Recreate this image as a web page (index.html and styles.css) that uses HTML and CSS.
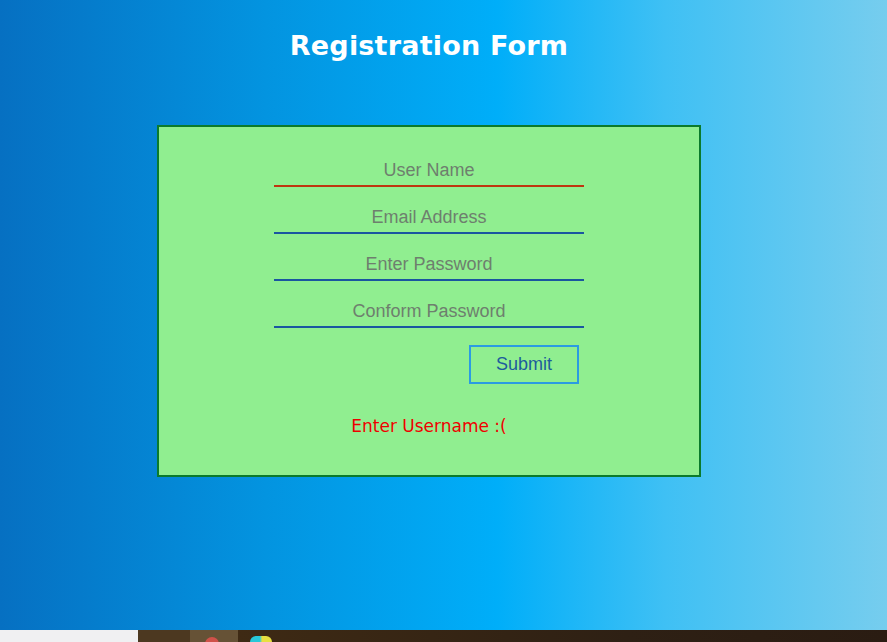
FILE: index.html
```html
<!DOCTYPE html>
<html lang="en">
<head>
<meta charset="utf-8">
<title>Registration Form</title>
<link rel="stylesheet" href="styles.css">
</head>
<body>
<div class="screen">
  <main class="page">
    <div class="wrap">
      <h1 class="title">Registration Form</h1>
      <form class="card" onsubmit="return false;">
        <input class="field field-error" type="text" placeholder="User Name">
        <input class="field" type="email" placeholder="Email Address">
        <input class="field" type="password" placeholder="Enter Password">
        <input class="field" type="password" placeholder="Conform Password">
        <div class="actions">
          <button class="submit" type="submit">Submit</button>
        </div>
        <p class="message">Enter Username :(</p>
      </form>
    </div>
  </main>
  <div class="taskbar">
    <div class="tb-blank"></div>
    <div class="tb-btn"></div>
    <div class="tb-btn tb-active"><span class="tb-dot"></span></div>
    <div class="tb-rest"><span class="tb-icon"></span></div>
  </div>
</div>
</body>
</html>
```
FILE: styles.css
```css
html, body {
  margin: 0;
  padding: 0;
  height: 100%;
}
body {
  overflow: hidden;
}
.screen {
  display: flex;
  flex-direction: column;
  height: 642px;
}
.page {
  height: 630px;
  background: linear-gradient(to right, #0670c2 0%, #0394e0 30%, #00aef9 56%, #3fc0f4 75%, #76cdee 100%);
}
.wrap {
  width: 858px;
  display: flex;
  flex-direction: column;
  align-items: center;
}
.title {
  margin: 25px 0 0;
  height: 100px;
  font-family: "Comic Sans MS", "DejaVu Sans", sans-serif;
  font-weight: bold;
  font-size: 27px;
  line-height: 42px;
  color: #ffffff;
  letter-spacing: 0.2px;
}
.card {
  box-sizing: border-box;
  width: 544px;
  height: 352px;
  background: #90ee90;
  border: 2px solid #0b7a2c;
  display: flex;
  flex-direction: column;
  align-items: center;
  padding-top: 24px;
}
.field {
  box-sizing: border-box;
  width: 310px;
  height: 36px;
  margin: 0 0 11px;
  padding: 4px 0 0;
  border: none;
  border-bottom: 2px solid #1a56a0;
  background: transparent;
  text-align: center;
  font-family: "Liberation Sans", Arial, sans-serif;
  font-size: 18px;
  color: #333;
  outline: none;
}
.field::placeholder {
  color: #6e7f6e;
}
.field-error {
  border-bottom-color: #bf3510;
}
.actions {
  width: 310px;
  display: flex;
  justify-content: flex-end;
  margin-top: 6px;
}
.submit {
  box-sizing: border-box;
  width: 110px;
  height: 39px;
  margin-right: 5px;
  background: transparent;
  border: 2px solid #2b9be2;
  font-family: "Liberation Sans", Arial, sans-serif;
  font-size: 18px;
  color: #1c5c9c;
  padding: 0;
}
.message {
  margin: 30px 0 0;
  font-family: "Comic Sans MS", "DejaVu Sans", sans-serif;
  font-size: 17px;
  line-height: 24px;
  color: #ee0000;
}
.taskbar {
  height: 12px;
  display: flex;
}
.tb-blank {
  width: 138px;
  background: #f0f0f2;
}
.tb-btn {
  width: 52px;
  background: #4c3820;
  position: relative;
  overflow: hidden;
}
.tb-active {
  width: 48px;
  background: #665236;
}
.tb-dot {
  position: absolute;
  left: 15px;
  top: 7px;
  width: 14px;
  height: 14px;
  border-radius: 50%;
  background: #d0524a;
}
.tb-rest {
  flex: 1;
  background: linear-gradient(to right, #3e2a14, #2e2014 60%, #2a1c12);
  position: relative;
  overflow: hidden;
}
.tb-icon {
  position: absolute;
  left: 12px;
  top: 6px;
  width: 22px;
  height: 14px;
  border-radius: 6px;
  background: linear-gradient(to right, #28c8d8 0%, #28c8d8 45%, #e8e040 55%, #e8e040 100%);
}
```
